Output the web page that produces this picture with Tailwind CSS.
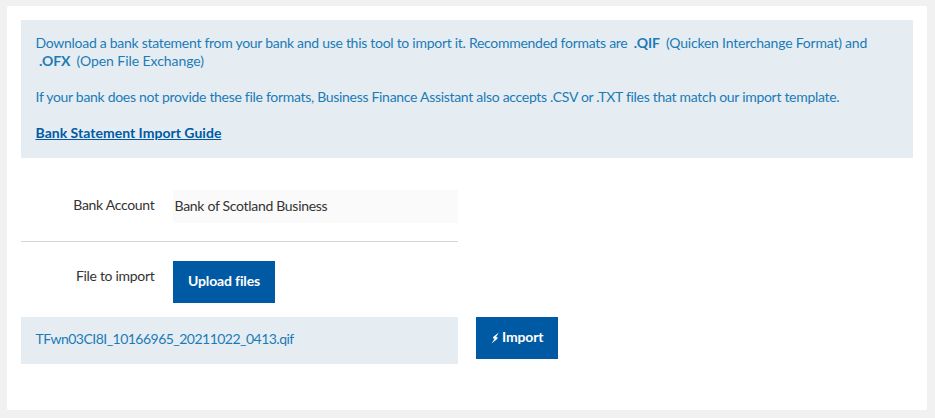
<!DOCTYPE html>
<html lang="en">
  <head>
    <meta charset="UTF-8" />
    <meta name="viewport" content="width=device-width, initial-scale=1.0" />
    <title>Import Bank Statement</title>
    <script src="https://cdn.jsdelivr.net/npm/@tailwindcss/browser@4"></script>
  </head>
  <body
    class="h-[418px] overflow-hidden bg-[#f1f1f1] pt-1.5 pl-[7px] font-[Lato,sans-serif] text-[14px] leading-[18px] tracking-[-0.3px] text-[#333]"
  >
    <main class="h-[404px] w-[920px] rounded-[2px] bg-white p-3.5">
      <!-- Supported formats -->
      <section
        class="h-[138px] bg-[#e5edf3] px-[14.5px] pt-3.5 whitespace-nowrap text-[#1c7bb5]"
      >
        <p>
          <span class="tracking-[-0.28px]">Download a bank statement from your bank and use this tool to import it. Recommended formats are</span>
          <b class="ml-[3px] tracking-[-0.1px]">.QIF</b>
          <span class="ml-[3px] tracking-[-0.21px]">(Quicken Interchange Format) and</span>
        </p>
        <p>
          <b class="ml-[3.5px] tracking-[-0.1px]">.OFX</b>
          <span class="ml-[3px] tracking-[-0.06px]">(Open File Exchange)</span>
        </p>
        <p class="mt-[18px]">
          <span>If your bank does not provide these file formats, Business Finance Assistant also accepts .CSV or .TXT files that match our import template.</span>
        </p>
        <p class="mt-[18px]">
          <a href="#" class="font-bold tracking-[0.02px] text-[#005aa3] underline"
            >Bank Statement Import Guide</a
          >
        </p>
      </section>

      <!-- Import form -->
      <form class="mt-8 w-[437px]">
        <div class="flex h-[52px] border-b border-[#d5d5d5]">
          <label class="mt-1.5 w-[133.5px] text-right">
            <span>Bank Account</span>
          </label>
          <div class="ml-[18.5px] h-[33px] w-[285px] bg-[#fafafa] pt-[7px] pl-[1.5px]">
            <span>Bank of Scotland Business</span>
          </div>
        </div>
        <div class="mt-[19px] flex h-[42px]">
          <label class="mt-1.5 w-[133.5px] text-right">
            <span>File to import</span>
          </label>
          <button
            type="button"
            class="ml-[18.5px] w-[102px] bg-[#005aa3] pb-0.5 font-bold tracking-[-0.15px] text-white"
          >
            <span>Upload files</span>
          </button>
        </div>
      </form>

      <div class="mt-3.5 flex items-start gap-[18px]">
        <div
          class="h-[47px] w-[437px] bg-[#e5edf3] pt-[13px] pl-[14.5px] tracking-[-0.52px] text-[#1c7bb5]"
        >
          <span>TFwn03CI8I_10166965_20211022_0413.qif</span>
        </div>
        <button
          type="button"
          class="flex h-[42px] w-[82px] items-center bg-[#005aa3] pb-0.5 pl-[15px] font-bold tracking-[-0.15px] text-white"
        >
          <svg class="mt-0.5 mr-[3px] h-3 w-2" viewBox="0 0 8 12" fill="currentColor">
            <path d="M7.8.5 2.4 4.8 1.8 6.2 3.6 6.7.5 11.5 6.2 7 6.8 5.5 5.1 5z" />
          </svg>
          <span>Import</span>
        </button>
      </div>
    </main>
  </body>
</html>
